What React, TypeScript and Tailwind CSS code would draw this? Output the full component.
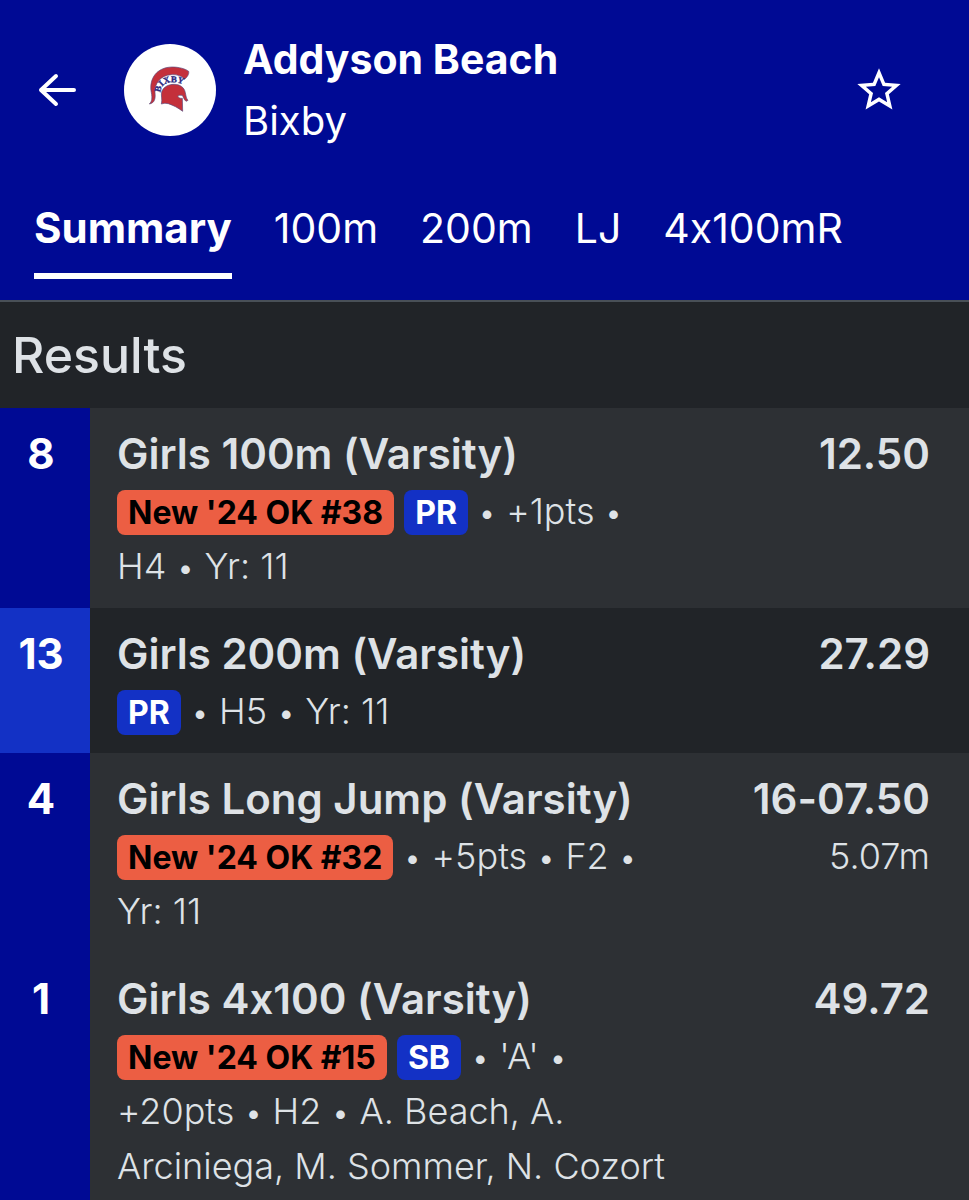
import React from "react";
import { MdStarBorder } from "react-icons/md";

type Badge = { label: string; kind: "rank" | "best" };

type Result = {
  place: number;
  event: string;
  mark: string;
  metric?: string;
  badges: Badge[];
  details: string[];
};

const tabs = ["Summary", "100m", "200m", "LJ", "4x100mR"];

const results: Result[] = [
  {
    place: 8,
    event: "Girls 100m (Varsity)",
    mark: "12.50",
    badges: [
      { label: "New '24 OK #38", kind: "rank" },
      { label: "PR", kind: "best" },
    ],
    details: ["+1pts", "H4", "Yr: 11"],
  },
  {
    place: 13,
    event: "Girls 200m (Varsity)",
    mark: "27.29",
    badges: [{ label: "PR", kind: "best" }],
    details: ["H5", "Yr: 11"],
  },
  {
    place: 4,
    event: "Girls Long Jump (Varsity)",
    mark: "16-07.50",
    metric: "5.07m",
    badges: [{ label: "New '24 OK #32", kind: "rank" }],
    details: ["+5pts", "F2", "Yr: 11"],
  },
  {
    place: 1,
    event: "Girls 4x100 (Varsity)",
    mark: "49.72",
    badges: [
      { label: "New '24 OK #15", kind: "rank" },
      { label: "SB", kind: "best" },
    ],
    details: ["'A'", "+20pts", "H2", "A. Beach, A. Arciniega, M. Sommer, N. Cozort"],
  },
];

const badgeStyles = {
  rank: "bg-[#ec5e43] text-black",
  best: "bg-[#1331c5] text-white",
};

const ArrowLeft = () => (
  <svg viewBox="0 0 40 36" className="w-10 h-9" fill="none" stroke="currentColor" strokeWidth="4" strokeLinecap="round" strokeLinejoin="round">
    <path d="M37 18H4M19 4L4 18L19 32" />
  </svg>
);

const TeamLogo = () => (
  <svg viewBox="12 12 276 276" className="w-[92px] h-[92px] shrink-0" role="img" aria-label="Bixby Spartans">
    <circle cx="150" cy="150" r="138" fill="#fff" />
    <g fill="#c4303b" stroke="#5b4a7c" strokeWidth="2" strokeLinejoin="round">
      <path d="M88 192C96 184 97 174 94 158C86 116 110 82 156 81C176 81 196 86 206 94C208 102 202 111 194 118C186 108 172 103 154 104C122 106 103 130 105 158C107 176 104 189 88 192Z" />
      <path d="M124 192C128 178 121 164 126 153C132 140 146 133 162 133C180 133 193 142 196 158C198 168 199 176 204 181L198 184C192 178 190 173 188 167C182 165 176 165 173 168C175 173 181 176 187 175L188 214C174 203 160 196 145 191Q134 188 124 192Z" />
    </g>
    <path id="crestArc" d="M122 158C120 140 136 127 156 127C170 127 182 129 194 138" fill="none" />
    <text fill="#2b2a80" stroke="#2b2a80" strokeWidth="1" fontFamily="Liberation Serif, serif" fontWeight="700" fontSize="27">
      <textPath href="#crestArc">BIXBY</textPath>
    </text>
  </svg>
);

const ResultRow = ({ result, striped }: { result: Result; striped: boolean }) => (
  <li className={`flex ${striped ? "bg-[#212428]" : "bg-[#2d3034]"}`}>
    <div
      className={`w-[90px] shrink-0 pt-4 pr-2 text-center text-[42px] leading-[60px] font-bold text-white ${
        striped ? "bg-[#1331c5]" : "bg-[#000a94]"
      }`}
    >
      {result.place}
    </div>
    <div className="flex grow justify-between pt-4 pb-3.5 pl-[27px] pr-[39px]">
      <div className="w-[552px]">
        <h3 className="text-[42px] leading-[60px] font-semibold">{result.event}</h3>
        <p className="text-4xl leading-[55px] font-light">
          {result.badges.map((badge) => (
            <React.Fragment key={badge.label}>
              <span
                className={`inline-block rounded-lg px-[11px] text-[32px] leading-[45px] font-bold ${badgeStyles[badge.kind]}`}
              >
                {badge.label}
              </span>{" "}
            </React.Fragment>
          ))}
          {result.details.map((detail) => (
            <React.Fragment key={detail}>
              <span className="text-[32px] leading-none">•</span>
              {` ${detail} `}
            </React.Fragment>
          ))}
        </p>
      </div>
      <div className="text-right whitespace-nowrap">
        <p className="text-[42px] leading-[60px] font-semibold">{result.mark}</p>
        {result.metric && <p className="text-4xl leading-[55px] font-light">{result.metric}</p>}
      </div>
    </div>
  </li>
);

const App = () => {
  return (
    <div className="min-h-screen bg-[#212428] text-[#dee2e6] font-['Inter',sans-serif] [font-feature-settings:'calt'_0]">
      <header className="bg-[#000a94] text-white border-b-2 border-[#495057]">
        <div className="flex items-center pt-7 pl-[37px] pr-[64px]">
          <button aria-label="Back">
            <ArrowLeft />
          </button>
          <div className="ml-[47px] flex grow items-center gap-[27px]">
            <TeamLogo />
            <div>
              <h1 className="text-[41px] leading-[62px] font-bold">Addyson Beach</h1>
              <p className="text-[40px] leading-[62px]">Bixby</p>
            </div>
          </div>
          <button aria-label="Add to favorites">
            <MdStarBorder className="w-[52px] h-[52px]" />
          </button>
        </div>
        <nav className="flex gap-[42px] pt-11 pb-[21px] pl-[34px]">
          {tabs.map((tab, i) => (
            <a
              key={tab}
              href="#"
              className={`pb-[13px] border-b-[6px] leading-[64px] ${
                i === 0 ? "text-[42px] font-bold border-white" : "text-[41px] border-transparent"
              }`}
            >
              {tab}
            </a>
          ))}
        </nav>
      </header>
      <main>
        <h2 className="px-3 py-4 text-[50px] leading-[74px] font-medium">Results</h2>
        <ul>
          {results.map((result, i) => (
            <ResultRow key={result.event} result={result} striped={i === 1} />
          ))}
        </ul>
      </main>
    </div>
  );
};

export default App;
